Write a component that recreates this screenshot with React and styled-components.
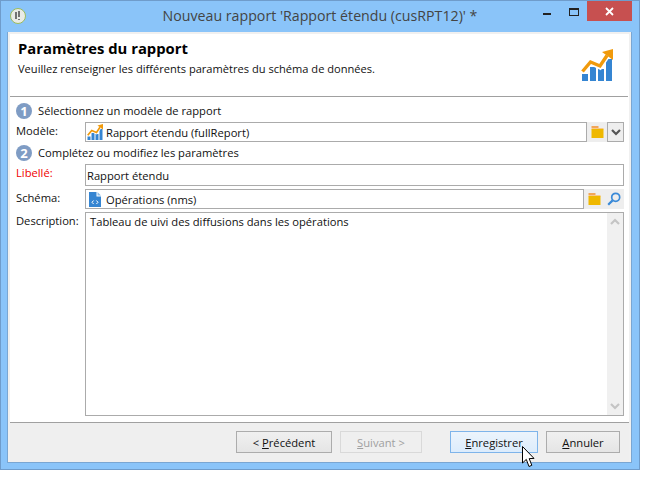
import React from "react";
import styled, { createGlobalStyle } from "styled-components";

const GlobalStyle = createGlobalStyle`
  html, body {
    margin: 0;
    padding: 0;
    background: #fff;
  }
  body {
    font-family: "Open Sans", "Noto Sans", "Liberation Sans", sans-serif;
    font-size: 11.2px;
    color: #111;
  }
`;

const ChartIcon = ({ size }) => (
  <svg width={size} height={size} viewBox="0 0 32 32">
    <rect x="1" y="25" width="6" height="7" fill="#3585d2" />
    <rect x="9" y="18" width="6" height="14" fill="#3585d2" />
    <rect x="17" y="20" width="6" height="12" fill="#3585d2" />
    <rect x="25" y="10" width="6" height="22" fill="#3585d2" />
    <path d="M2 23 L9.5 13.5 L19 18 L27 6" fill="none" stroke="#fff" strokeWidth="5" />
    <path d="M1.5 22.5 L9.5 13 L19 17 L26 6.5" fill="none" stroke="#f09a0c" strokeWidth="3.4" />
    <path d="M21 3 L32 0 L32 11 Z" fill="#f09a0c" />
  </svg>
);

const FolderIcon = () => (
  <svg width="13" height="12" viewBox="0 0 13 12">
    <rect x="0.5" y="0" width="7" height="2" fill="#f2a65a" />
    <rect x="0.5" y="2" width="12" height="1.5" fill="#f7c98c" />
    <rect x="0.5" y="3" width="12" height="9" fill="#efb800" />
  </svg>
);

const SearchIcon = () => (
  <svg width="14" height="14" viewBox="0 0 14 14">
    <circle cx="8.7" cy="5.3" r="4" fill="none" stroke="#3a8ad8" strokeWidth="1.7" />
    <path d="M5.6 8.4 L1.2 12.8" stroke="#3a8ad8" strokeWidth="2.2" />
  </svg>
);

const DocIcon = () => (
  <svg width="12" height="15" viewBox="0 0 12 15">
    <path d="M0 0 H7.5 V4.5 H12 V15 H0 Z" fill="#3585d2" />
    <path d="M8.5 0 L12 3.5 H8.5 Z" fill="#8dbce8" />
    <path d="M4.6 8.5 L3 10.3 L4.6 12 M7.4 8.5 L9 10.3 L7.4 12" fill="none" stroke="#fff" strokeWidth="1" />
  </svg>
);

const Chevron = ({ up, color }) => (
  <svg width="10" height="7" viewBox="0 0 10 7">
    <path
      d={up ? "M1 6 L5 2 L9 6" : "M1 1 L5 5 L9 1"}
      fill="none"
      stroke={color}
      strokeWidth="2.2"
    />
  </svg>
);

const AppLogo = () => (
  <svg width="16" height="16" viewBox="0 0 16 16">
    <circle cx="8" cy="8" r="7.5" fill="#e9ebe6" stroke="#9cbc5c" />
    <path d="M6 4 V11 M9 3 V9 M9 11 V12" stroke="#555" strokeWidth="1.6" fill="none" />
  </svg>
);

const Cursor = styled.svg`
  position: absolute;
  left: 522px;
  top: 446px;
`;

const Win = styled.div`
  position: relative;
  box-sizing: border-box;
  width: 640px;
  height: 470px;
  border: 1px solid #6f9ccb;
  background: #8ac4f9;
  padding: 0 7px 6px 6px;
  display: flex;
  flex-direction: column;
`;

const TitleBar = styled.div`
  height: 31px;
  flex: none;
  display: flex;
  align-items: flex-start;
`;

const AppIconWrap = styled.div`
  width: 16px;
  height: 16px;
  margin: 7px 0 0 3px;
  flex: none;
`;

const TitleText = styled.div`
  flex: 1;
  text-align: center;
  font-size: 14.2px;
  line-height: 20px;
  margin: 5px 0 0 71px;
  color: #444;
  white-space: nowrap;
`;

const WinControls = styled.div`
  display: flex;
  align-items: flex-start;
  flex: none;
`;

const MinBtn = styled.div`
  width: 8px;
  height: 2px;
  margin: 12px 18px 0 0;
  background: #222;
`;

const MaxBtn = styled.div`
  box-sizing: border-box;
  width: 10px;
  height: 8px;
  margin: 7px 8px 0 0;
  border: 1px solid #222;
  border-top-width: 2px;
`;

const CloseBtn = styled.div`
  width: 45px;
  height: 20px;
  background: #c75050;
  color: #fff;
  display: flex;
  align-items: center;
  justify-content: center;
`;

const Client = styled.div`
  flex: 1;
  display: flex;
  flex-direction: column;
  background: #f0f0f0;
  border-left: 1px solid #7aa6d2;
  border-right: 1px solid #7aa6d2;
  border-bottom: 1px solid #7aa6d2;
  min-height: 0;
`;

const Page = styled.div`
  flex: 1;
  margin: 2px 2px 0 2px;
  background: #fff;
  display: flex;
  flex-direction: column;
  min-height: 0;
`;

const Header = styled.div`
  box-sizing: border-box;
  height: 63px;
  flex: none;
  padding: 4px 0 0 8px;
  display: flex;
  justify-content: space-between;
  border-bottom: 1px solid #a0a0a0;
  margin-right: 1px;
`;

const HeadTitle = styled.div`
  font-size: 14.8px;
  line-height: 20px;
  font-weight: 700;
  color: #000;
`;

const HeadSub = styled.div`
  font-size: 11.1px;
  line-height: 16px;
  margin-top: 3px;
  color: #111;
`;

const HeadIcon = styled.div`
  margin: 11px 15px 0 0;
  flex: none;
`;

const Form = styled.div`
  flex: 1;
  display: flex;
  flex-direction: column;
  padding: 3px 5px 6px 6px;
  min-height: 0;
`;

const StepRow = styled.div`
  box-sizing: border-box;
  height: 22px;
  padding-bottom: 1px;
  flex: none;
  display: flex;
  align-items: center;
  gap: 6px;
`;

const StepNum = styled.span`
  width: 16px;
  height: 16px;
  border-radius: 50%;
  background: #7f9cc4;
  color: #fff;
  font-size: 13px;
  font-weight: 700;
  display: flex;
  align-items: center;
  justify-content: center;
`;

const Row = styled.div`
  display: flex;
  flex: none;
  height: ${(p) => p.$h}px;
  margin-top: ${(p) => p.$mt || 0}px;
`;

const Label = styled.div`
  width: 69px;
  flex: none;
  line-height: 18px;
  color: ${(p) => (p.$required ? "#f00000" : "#111")};
`;

const Field = styled.div`
  box-sizing: border-box;
  flex: 1;
  min-width: 0;
  display: flex;
  align-items: center;
  gap: 3px;
  border: 1px solid #ababab;
  padding-left: 1px;
  background: #fff;
`;

const Side = styled.div`
  display: flex;
  align-items: center;
  flex: none;
  background: #eeeeee;
  height: 100%;
`;

const IconBtn = styled.div`
  width: ${(p) => p.$w}px;
  height: 100%;
  display: flex;
  align-items: center;
  justify-content: center;
`;

const DropBtn = styled.div`
  box-sizing: border-box;
  width: 17px;
  height: 100%;
  border: 1px solid #ababab;
  background: #eeeeee;
  display: flex;
  align-items: center;
  justify-content: center;
`;

const DocWrap = styled.span`
  display: flex;
  margin: 0 2px 0 2px;
`;

const TextArea = styled.div`
  box-sizing: border-box;
  flex: 1;
  min-width: 0;
  display: flex;
  border: 1px solid #ababab;
  height: 100%;
`;

const AreaText = styled.div`
  flex: 1;
  padding: 1px 4px;
  line-height: 16px;
`;

const ScrollBar = styled.div`
  width: 16px;
  flex: none;
  background: #f0f0f0;
  display: flex;
  flex-direction: column;
  justify-content: space-between;
  align-items: center;
  padding: 5px 0;
`;

const Footer = styled.div`
  height: 40px;
  flex: none;
  box-sizing: border-box;
  border-top: 1px solid #a0a0a0;
  margin: 0 2px;
  background: #efefef;
  display: flex;
  align-items: flex-start;
  padding: 8px 0 0 226px;
`;

const Btn = styled.div`
  box-sizing: border-box;
  width: ${(p) => p.$w}px;
  margin-left: ${(p) => p.$ml || 0}px;
  height: 22px;
  display: flex;
  align-items: center;
  justify-content: center;
  white-space: pre;
  border: 1px solid #acacac;
  color: #111;
  background: linear-gradient(#f0f0f0, #e5e5e5);
`;

const SaveBtn = styled(Btn)`
  border-color: #7eb4ea;
  background: linear-gradient(#ecf4fc, #dcecfc);
`;

const OffBtn = styled(Btn)`
  border-color: #d9d9d9;
  color: #a0a0a0;
  background: #efefef;
`;

const App = () => {
  return (
    <>
      <GlobalStyle />
      <Win>
        <TitleBar>
          <AppIconWrap>
            <AppLogo />
          </AppIconWrap>
          <TitleText>Nouveau rapport 'Rapport étendu (cusRPT12)' *</TitleText>
          <WinControls>
            <MinBtn />
            <MaxBtn />
            <CloseBtn>
              <svg width="9" height="9" viewBox="0 0 9 9">
                <path d="M1 1 L8 8 M8 1 L1 8" stroke="#fff" strokeWidth="1.8" />
              </svg>
            </CloseBtn>
          </WinControls>
        </TitleBar>
        <Client>
          <Page>
            <Header>
              <div>
                <HeadTitle>Paramètres du rapport</HeadTitle>
                <HeadSub>Veuillez renseigner les différents paramètres du schéma de données.</HeadSub>
              </div>
              <HeadIcon>
                <ChartIcon size={32} />
              </HeadIcon>
            </Header>
            <Form>
              <StepRow>
                <StepNum>1</StepNum>
                Sélectionnez un modèle de rapport
              </StepRow>
              <Row $h={20}>
                <Label>Modèle:</Label>
                <Field>
                  <ChartIcon size={16} />
                  <span>Rapport étendu (fullReport)</span>
                </Field>
                <Side>
                  <IconBtn $w={20}>
                    <FolderIcon />
                  </IconBtn>
                  <DropBtn>
                    <Chevron color="#555" />
                  </DropBtn>
                </Side>
              </Row>
              <StepRow>
                <StepNum>2</StepNum>
                Complétez ou modifiez les paramètres
              </StepRow>
              <Row $h={22}>
                <Label $required>Libellé:</Label>
                <Field>Rapport étendu</Field>
              </Row>
              <Row $h={20} $mt={3}>
                <Label>Schéma:</Label>
                <Field>
                  <DocWrap>
                    <DocIcon />
                  </DocWrap>
                  <span>Opérations (nms)</span>
                </Field>
                <Side>
                  <IconBtn $w={20}>
                    <FolderIcon />
                  </IconBtn>
                  <IconBtn $w={20}>
                    <SearchIcon />
                  </IconBtn>
                </Side>
              </Row>
              <Row $h={204} $mt={3}>
                <Label>Description:</Label>
                <TextArea>
                  <AreaText>Tableau de uivi des diffusions dans les opérations</AreaText>
                  <ScrollBar>
                    <Chevron up color="#c4c4c4" />
                    <Chevron color="#c4c4c4" />
                  </ScrollBar>
                </TextArea>
              </Row>
            </Form>
          </Page>
          <Footer>
            <Btn $w={96}>
              {"< "}
              <u>P</u>récédent
            </Btn>
            <OffBtn $w={82} $ml={8}>
              <span>
                <u>S</u>uivant {">"}
              </span>
            </OffBtn>
            <SaveBtn $w={88} $ml={28}>
              <span>
                <u>E</u>nregistrer
              </span>
            </SaveBtn>
            <Btn $w={74} $ml={8}>
              <span>
                <u>A</u>nnuler
              </span>
            </Btn>
          </Footer>
        </Client>
      </Win>
      <Cursor width="13" height="22" viewBox="0 0 13 22">
        <path
          d="M0.5 0.5 V17 L4.3 13.4 L7 20.5 L9.8 19.3 L7.2 12.6 L12 12.4 Z"
          fill="#fff"
          stroke="#000"
          strokeWidth="1"
        />
      </Cursor>
    </>
  );
};

export default App;
